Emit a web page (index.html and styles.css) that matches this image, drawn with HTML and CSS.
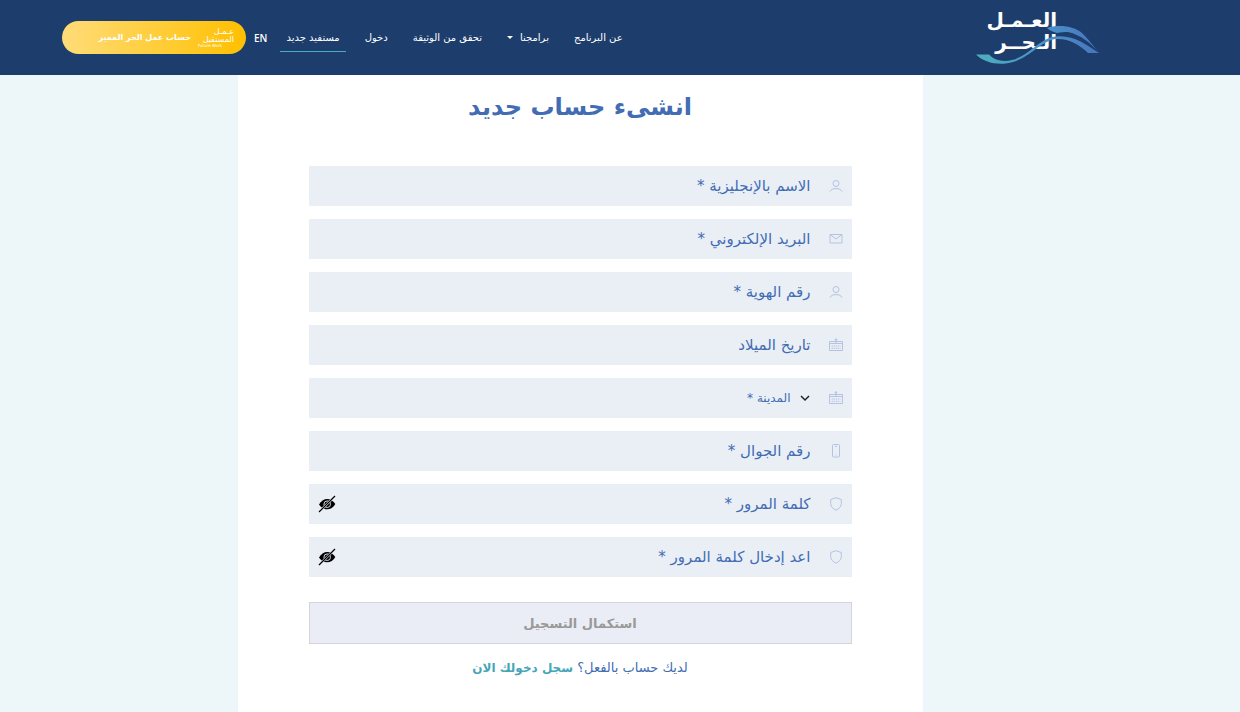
FILE: index.html
```html
<!DOCTYPE html>
<html lang="ar" dir="rtl">
<head>
<meta charset="utf-8">
<meta name="viewport" content="width=device-width, initial-scale=1">
<title>العمل الحر</title>
<link rel="stylesheet" href="styles.css">
</head>
<body>
<svg class="sprite" aria-hidden="true">
  <symbol id="user" viewBox="0 0 14 14"><circle cx="7" cy="4.500" r="3"/><path d="M.8 12.600C2 10.400 4.200 9.600 7 9.600s5 .8 6.200 3"/></symbol>
  <symbol id="mail" viewBox="0 0 14 14"><path d="M1 2.500h12v8.500H1zM1 2.500l6 4.500 6-4.500"/></symbol>
  <symbol id="calendar" viewBox="0 0 14 14"><path d="M.5 3.500h13v9H.5zM.5 5.500h13M7 1v4"/><path stroke-dasharray="1.500 .6" d="M2.500 8h9M2.500 10.300h9"/><circle cx="7" cy="1.500" r=".8"/></symbol>
  <symbol id="phone" viewBox="0 0 14 14"><rect x="3.500" y=".5" width="7" height="12.500" rx="1"/><path d="M6 2.500h2M6.500 11h1"/></symbol>
  <symbol id="shield" viewBox="0 0 14 14"><path d="M7 .7 12.300 2.500v4.200c0 3-2.300 5-5.300 6.500-3-1.500-5.300-3.500-5.300-6.500V2.500z"/></symbol>
  <symbol id="eye-off" viewBox="0 0 18 18"><path fill="#000" d="M1 9.500C3 6 6 4 9.200 4S15.500 6 17.300 9C15.500 12.500 12.500 14.300 9 14.300S3 12.500 1 9.500z"/><circle cx="9.200" cy="9.200" r="3.300" fill="none" stroke="#eaeff6" stroke-width=".9"/><path stroke="#eaeff6" stroke-width="2.400" d="M2.500 15.500 15.500 2.500"/><path stroke="#000" stroke-width="1.200" d="M1 17 17 1"/></symbol>
</svg>

<header class="topbar">
  <a class="logo" href="#">
    <span class="logo-text">العـمـل</span>
    <span class="logo-text">الـحــر</span>
    <svg class="logo-wave" viewBox="0 0 123 40" aria-hidden="true">
      <defs><linearGradient id="wave" gradientUnits="userSpaceOnUse" x1="0" y1="0" x2="123" y2="0"><stop offset="0" stop-color="#4cb0bd"/><stop offset=".6" stop-color="#4a8fc8"/><stop offset="1" stop-color="#4a74bd"/></linearGradient></defs>
      <path fill="url(#wave)" d="M0 29.500h13c6 6.500 15 7.500 23 5.500C52 31 62 16 76 12c19-4 34 7 47 16h-11C103 19 92 13 79 14 66 16 54 32 37 37 24 41 8 38 0 29.500z"/>
      <path fill="url(#wave)" d="M71 3c11-4 28-2 36 6 7 7 12 14 16 19C115 18 105 10 92 7c-4 0-7 0-11 1q-7-2-10-5z"/>
    </svg>
  </a>
  <nav class="menu" aria-label="القائمة">
    <a class="menu-link" href="#">عن البرنامج</a>
    <a class="menu-link" href="#">برامجنا<span class="caret"></span></a>
    <a class="menu-link" href="#">تحقق من الوثيقة</a>
    <a class="menu-link" href="#">دخول</a>
    <a class="menu-link menu-link-active" href="#">مستفيد جديد</a>
    <a class="lang" href="#" lang="en">EN</a>
    <a class="premium" href="#">
      <span class="future"><span class="future-top">عـمـل</span><span>المستقبل</span><span class="future-en" lang="en">Future Work</span></span>
      <span>حساب عمل الحر المميز</span>
    </a>
  </nav>
</header>

<div class="page">
<main class="panel">
  <h1 class="title">انشىء حساب جديد</h1>
  <form class="form">
    <div class="field"><svg class="icon"><use href="#user"/></svg><label for="name">الاسم بالإنجليزية *</label><input id="name" type="text"></div>
    <div class="field"><svg class="icon"><use href="#mail"/></svg><label for="email">البريد الإلكتروني *</label><input id="email" type="email"></div>
    <div class="field"><svg class="icon"><use href="#user"/></svg><label for="idno">رقم الهوية *</label><input id="idno" type="text"></div>
    <div class="field"><svg class="icon"><use href="#calendar"/></svg><label for="birth">تاريخ الميلاد</label><input id="birth" type="text"></div>
    <div class="field"><svg class="icon"><use href="#calendar"/></svg><svg class="chevron" viewBox="0 0 12 8" aria-hidden="true"><path d="m2 2 4 4 4-4"/></svg><select aria-label="المدينة"><option>المدينة *</option></select></div>
    <div class="field"><svg class="icon"><use href="#phone"/></svg><label for="mobile">رقم الجوال *</label><input id="mobile" type="tel"></div>
    <div class="field"><svg class="icon"><use href="#shield"/></svg><label for="pass">كلمة المرور *</label><input id="pass" type="password"><button class="reveal" type="button" aria-label="إظهار كلمة المرور"><svg><use href="#eye-off"/></svg></button></div>
    <div class="field"><svg class="icon"><use href="#shield"/></svg><label for="pass2">اعد إدخال كلمة المرور *</label><input id="pass2" type="password"><button class="reveal" type="button" aria-label="إظهار كلمة المرور"><svg><use href="#eye-off"/></svg></button></div>
    <button class="submit" type="submit" disabled>استكمال التسجيل</button>
  </form>
  <p class="login">لديك حساب بالفعل؟ <a href="#">سجل دخولك الان</a></p>
</main>
</div>
</body>
</html>
```
FILE: styles.css
```css
* { box-sizing: border-box; }

body {
  margin: 0;
  min-height: 100vh;
  display: flex;
  flex-direction: column;
  background: #edf6f8;
  color: #426cb3;
  font-family: "DejaVu Sans", sans-serif;
  font-size: 15px;
}

a { color: inherit; text-decoration: none; }
button, input, select { font: inherit; color: inherit; }

.sprite { position: absolute; width: 0; height: 0; }

.topbar {
  display: flex;
  align-items: center;
  justify-content: space-between;
  min-height: 75px;
  padding: 0 141px 0 62px;
  background: #1d3d6c;
  color: #fff;
}

.logo {
  position: relative;
  display: flex;
  flex-direction: column;
  align-items: flex-start;
  width: 123px;
  height: 58px;
  padding-right: 42px;
}
.logo-text { font-size: 20px; font-weight: bold; line-height: 22px; }
.logo-wave { position: absolute; right: 0; bottom: 2px; width: 123px; height: 40px; }

.menu { display: flex; align-items: center; font-size: 10px; white-space: nowrap; }
.menu-link {
  display: flex;
  align-items: center;
  height: 28px;
  margin-left: 13px;
  padding: 0 6px;
  border-bottom: 1px solid transparent;
}
.menu-link-active { border-bottom-color: #46aebd; }
.caret {
  margin-right: 7px;
  border: 3px solid transparent;
  border-top-color: #fff;
  border-bottom: 0;
}
.lang { margin-left: 8px; font: 600 10px "Open Sans", sans-serif; }

.premium {
  display: flex;
  align-items: center;
  gap: 7px;
  width: 184px;
  height: 33px;
  padding-right: 12px;
  border-radius: 17px;
  background: linear-gradient(to left, #ffc000, #ffdc78);
  font-size: 8px;
  font-weight: bold;
}
.future { display: flex; flex-direction: column; width: 36px; font-weight: normal; line-height: 8px; }
.future-en { font-size: 4px; line-height: 4px; text-align: left; }

.page {
  flex: 1;
  display: flex;
  padding-right: 0;
  padding-inline-start: 80px;
}
.panel {
  width: 100%;
  max-width: 685px;
  margin: 0 auto;
  padding: 12px 71px 32px;
  background: #fff;
}
.title { margin: 0 0 39px; font-size: 24px; line-height: 40px; text-align: center; }
.form { display: flex; flex-direction: column; gap: 13px; }

.field {
  display: flex;
  align-items: center;
  height: 40px;
  padding: 0 9px;
  background: #eaeff6;
}
.icon {
  flex: none;
  width: 14px;
  height: 14px;
  margin-left: 18px;
  fill: none;
  stroke: #b4c3e0;
}
.field input, .field select {
  flex: 1;
  min-width: 0;
  height: 100%;
  padding: 0 8px;
  border: 0;
  background: transparent;
  outline: 0;
}
.field select { appearance: none; font-size: 12px; }
.chevron { width: 12px; height: 8px; fill: none; stroke: #222; stroke-width: 1.5; }
.reveal { width: 18px; height: 18px; padding: 0; border: 0; background: none; }
.reveal svg { display: block; width: 18px; height: 18px; }

.submit {
  height: 42px;
  margin-top: 12px;
  border: 1px solid #d5d5d8;
  background: #eaedf5;
  color: #999;
  font-size: 13px;
  font-weight: bold;
}
.login { margin: 14px 0 0; font-size: 13px; line-height: 20px; text-align: center; }
.login a { color: #45a6b8; font-size: 12px; font-weight: bold; }
```
